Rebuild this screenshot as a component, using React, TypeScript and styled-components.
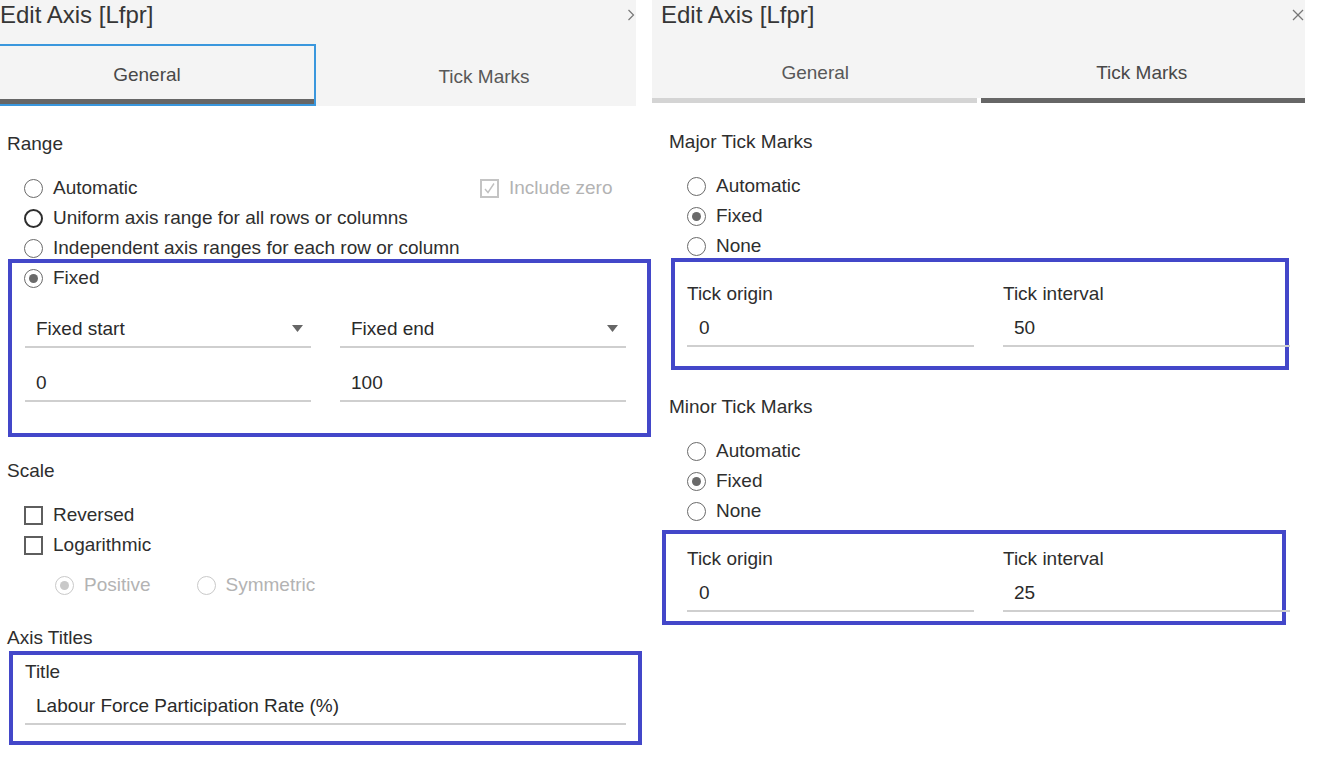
import React from "react";
import styled, { createGlobalStyle } from "styled-components";

const GlobalStyle = createGlobalStyle`
  html, body { margin: 0; padding: 0; background: #ffffff; }
  body { font-family: "Liberation Sans", Arial, sans-serif; color: #333; }
  * { box-sizing: border-box; }
`;

const ANNOT = "#4347c9";

const Page = styled.div`
  display: flex;
  align-items: flex-start;
  width: 1341px;
  height: 779px;
  overflow: hidden;
  background: #fff;
`;

const Panel = styled.div<{ $width: number }>`
  width: ${(p) => p.$width}px;
  flex: none;
  display: flex;
  flex-direction: column;
`;

const Header = styled.div<{ $width: number }>`
  width: ${(p) => p.$width}px;
  display: flex;
  flex-direction: column;
  overflow: hidden;
`;

const TitleRow = styled.div<{ $pad: number }>`
  height: 44px;
  background: #f4f4f4;
  display: flex;
  align-items: flex-start;
  justify-content: space-between;
  padding-left: ${(p) => p.$pad}px;
  padding-right: 1px;
`;

const Title = styled.h1`
  margin: 0;
  font-size: 24px;
  line-height: 30px;
  font-weight: normal;
  color: #363636;
`;

const HeaderIcon = styled.span`
  display: flex;
  align-items: center;
  height: 30px;
`;

const Tabs = styled.div<{ $cols: string; $shift?: number }>`
  display: grid;
  grid-template-columns: ${(p) => p.$cols};
  margin-left: ${(p) => p.$shift ?? 0}px;
`;

const Tab = styled.div<{ $height: number; $focused?: boolean }>`
  height: ${(p) => p.$height}px;
  display: flex;
  flex-direction: column;
  border: ${(p) => (p.$focused ? "2px solid #3a97dd" : "none")};
`;

const TabLabel = styled.div<{ $active?: boolean }>`
  flex: 1;
  background: #f4f4f4;
  display: flex;
  align-items: center;
  justify-content: center;
  padding-top: 4px;
  font-size: 19px;
  color: ${(p) => (p.$active ? "#484848" : "#585858")};
`;

const TabBar = styled.div<{ $tone: "dark" | "light" | "none"; $side?: "left" | "right" }>`
  height: ${(p) => (p.$tone === "none" ? 0 : 5)}px;
  flex: none;
  background: ${(p) => (p.$tone === "dark" ? "#666666" : p.$tone === "light" ? "#d4d4d4" : "transparent")};
  margin-left: ${(p) => (p.$side === "right" ? 2 : 0)}px;
  margin-right: ${(p) => (p.$side === "left" ? 2 : 0)}px;
`;

const Content = styled.div<{ $pad: number }>`
  display: flex;
  flex-direction: column;
  padding-left: ${(p) => p.$pad}px;
`;

const SectionTitle = styled.h2<{ $top: number; $lh?: number }>`
  margin: ${(p) => p.$top}px 0 0 0;
  font-size: 19px;
  line-height: ${(p) => p.$lh ?? 30}px;
  font-weight: normal;
  color: #2e2e2e;
`;

const OptionList = styled.div<{ $top: number }>`
  display: flex;
  flex-direction: column;
  margin-top: ${(p) => p.$top}px;
`;

const OptionRow = styled.div<{ $indent: number; $gap?: number }>`
  height: 30px;
  display: flex;
  align-items: center;
  padding-left: ${(p) => p.$indent}px;
  gap: ${(p) => p.$gap ?? 0}px;
`;

const Option = styled.label<{ $disabled?: boolean }>`
  display: flex;
  align-items: center;
  gap: 10px;
  font-size: 19px;
  color: ${(p) => (p.$disabled ? "#b3b3b3" : "#2e2e2e")};
`;

const Aside = styled.div`
  margin-left: auto;
  width: 172px;
`;

const RadioCircle = styled.span<{ $checked?: boolean; $disabled?: boolean; $strong?: boolean }>`
  width: 19px;
  height: 19px;
  flex: none;
  border-radius: 50%;
  border: ${(p) =>
    p.$strong ? "2px solid #2e2e2e" : `1.5px solid ${p.$disabled ? "#c9c9c9" : "#6a6a6a"}`};
  display: inline-flex;
  align-items: center;
  justify-content: center;
  &::after {
    content: "";
    width: 9px;
    height: 9px;
    border-radius: 50%;
    background: ${(p) => (p.$disabled ? "#c9c9c9" : "#6a6a6a")};
    display: ${(p) => (p.$checked ? "block" : "none")};
  }
`;

const CheckSquare = styled.span<{ $disabled?: boolean }>`
  width: 19px;
  height: 19px;
  flex: none;
  border: 2px solid ${(p) => (p.$disabled ? "#c4c4c4" : "#5e5e5e")};
  display: inline-flex;
  align-items: center;
  justify-content: center;
`;

const Highlight = styled.div<{ $top: number; $left: number; $width: number; $pad: string }>`
  margin-top: ${(p) => p.$top}px;
  margin-left: ${(p) => p.$left}px;
  width: ${(p) => p.$width}px;
  border: 4px solid ${ANNOT};
  padding: ${(p) => p.$pad};
  display: flex;
  flex-direction: column;
`;

const FieldGrid = styled.div<{ $top: number; $cols: string; $shift?: number }>`
  display: grid;
  grid-template-columns: ${(p) => p.$cols};
  column-gap: 29px;
  row-gap: 17px;
  margin-top: ${(p) => p.$top}px;
  margin-left: ${(p) => p.$shift ?? 0}px;
`;

const FieldGroup = styled.div`
  display: flex;
  flex-direction: column;
  gap: 4px;
`;

const FieldLabel = styled.div`
  font-size: 19px;
  line-height: 24px;
  color: #2e2e2e;
`;

const Field = styled.div<{ $pad?: number; $width?: number; $top?: number }>`
  height: 37px;
  width: ${(p) => (p.$width ? `${p.$width}px` : "auto")};
  margin-top: ${(p) => p.$top ?? 0}px;
  border-bottom: 2px solid #cfcfcf;
  display: flex;
  align-items: center;
  justify-content: space-between;
  padding-left: ${(p) => p.$pad ?? 11}px;
  padding-right: 8px;
  font-size: 19px;
  color: #2a2a2a;
`;

const Radio = ({
  label,
  checked,
  disabled,
  strong,
}: {
  label: string;
  checked?: boolean;
  disabled?: boolean;
  strong?: boolean;
}) => (
  <Option $disabled={disabled}>
    <RadioCircle $checked={checked} $disabled={disabled} $strong={strong} />
    {label}
  </Option>
);

const Checkbox = ({ label, checked, disabled }: { label: string; checked?: boolean; disabled?: boolean }) => (
  <Option $disabled={disabled}>
    <CheckSquare $disabled={disabled}>
      {checked && (
        <svg width="13" height="13" viewBox="0 0 13 13">
          <polyline points="2,7 5,10.5 11,1.5" fill="none" stroke="#c0c0c0" strokeWidth="1.4" />
        </svg>
      )}
    </CheckSquare>
    {label}
  </Option>
);

const Caret = () => (
  <svg width="11" height="7" viewBox="0 0 11 7">
    <polygon points="0,0 11,0 5.5,7" fill="#666" />
  </svg>
);

const Chevron = () => (
  <svg width="8" height="12" viewBox="0 0 8 12">
    <polyline points="1.5,1 6.5,6 1.5,11" fill="none" stroke="#777" strokeWidth="1.2" />
  </svg>
);

const CloseX = () => (
  <svg width="12" height="12" viewBox="0 0 12 12">
    <line x1="1" y1="1" x2="11" y2="11" stroke="#777" strokeWidth="1.2" />
    <line x1="11" y1="1" x2="1" y2="11" stroke="#777" strokeWidth="1.2" />
  </svg>
);

const TickFields = ({ origin, interval }: { origin: string; interval: string }) => (
  <FieldGrid $top={0} $cols="287px 282px">
    <FieldGroup>
      <FieldLabel>Tick origin</FieldLabel>
      <Field $pad={12}>{origin}</Field>
    </FieldGroup>
    <FieldGroup>
      <FieldLabel>Tick interval</FieldLabel>
      <Field $pad={11} $width={287}>{interval}</Field>
    </FieldGroup>
  </FieldGrid>
);

export default function App() {
  return (
    <>
      <GlobalStyle />
      <Page>
        <Panel $width={652}>
          <Header $width={636}>
            <TitleRow $pad={0}>
              <Title>Edit Axis [Lfpr]</Title>
              <HeaderIcon>
                <Chevron />
              </HeaderIcon>
            </TitleRow>
            <Tabs $cols="338px 336px" $shift={-22}>
              <Tab $height={62} $focused>
                <TabLabel $active>General</TabLabel>
                <TabBar $tone="dark" />
              </Tab>
              <Tab $height={62}>
                <TabLabel>Tick Marks</TabLabel>
                <TabBar $tone="none" />
              </Tab>
            </Tabs>
          </Header>

          <Content $pad={7}>
            <SectionTitle $top={23}>Range</SectionTitle>
            <OptionList $top={14}>
              <OptionRow $indent={17}>
                <Radio label="Automatic" />
                <Aside>
                  <Checkbox label="Include zero" checked disabled />
                </Aside>
              </OptionRow>
              <OptionRow $indent={17}>
                <Radio label="Uniform axis range for all rows or columns" strong />
              </OptionRow>
              <OptionRow $indent={17}>
                <Radio label="Independent axis ranges for each row or column" />
              </OptionRow>
            </OptionList>

            <Highlight $top={-4} $left={1} $width={643} $pad="0 0 31px 12px">
              <OptionRow $indent={0}>
                <Radio label="Fixed" checked />
              </OptionRow>
              <FieldGrid $top={18} $cols="286px 286px" $shift={1}>
                <Field>
                  Fixed start
                  <Caret />
                </Field>
                <Field>
                  Fixed end
                  <Caret />
                </Field>
                <Field>0</Field>
                <Field>100</Field>
              </FieldGrid>
            </Highlight>

            <SectionTitle $top={19}>Scale</SectionTitle>
            <OptionList $top={14}>
              <OptionRow $indent={17}>
                <Checkbox label="Reversed" />
              </OptionRow>
              <OptionRow $indent={17}>
                <Checkbox label="Logarithmic" />
              </OptionRow>
            </OptionList>
            <OptionList $top={10}>
              <OptionRow $indent={48} $gap={46}>
                <Radio label="Positive" checked disabled />
                <Radio label="Symmetric" disabled />
              </OptionRow>
            </OptionList>

            <SectionTitle $top={26} $lh={24}>
              Axis Titles
            </SectionTitle>
            <Highlight $top={1} $left={2} $width={633} $pad="5px 0 16px 12px">
              <FieldLabel>Title</FieldLabel>
              <Field $top={4} $width={601}>
                Labour Force Participation Rate (%)
              </Field>
            </Highlight>
          </Content>
        </Panel>

        <Panel $width={653}>
          <Header $width={653}>
            <TitleRow $pad={9}>
              <Title>Edit Axis [Lfpr]</Title>
              <HeaderIcon>
                <CloseX />
              </HeaderIcon>
            </TitleRow>
            <Tabs $cols="1fr 1fr">
              <Tab $height={59}>
                <TabLabel>General</TabLabel>
                <TabBar $tone="light" $side="left" />
              </Tab>
              <Tab $height={59}>
                <TabLabel $active>Tick Marks</TabLabel>
                <TabBar $tone="dark" $side="right" />
              </Tab>
            </Tabs>
          </Header>

          <Content $pad={17}>
            <SectionTitle $top={24}>Major Tick Marks</SectionTitle>
            <OptionList $top={14}>
              <OptionRow $indent={18}>
                <Radio label="Automatic" />
              </OptionRow>
              <OptionRow $indent={18}>
                <Radio label="Fixed" checked />
              </OptionRow>
              <OptionRow $indent={18}>
                <Radio label="None" />
              </OptionRow>
            </OptionList>
            <Highlight $top={-3} $left={2} $width={618} $pad="20px 0 19px 12px">
              <TickFields origin="0" interval="50" />
            </Highlight>

            <SectionTitle $top={22}>Minor Tick Marks</SectionTitle>
            <OptionList $top={14}>
              <OptionRow $indent={18}>
                <Radio label="Automatic" />
              </OptionRow>
              <OptionRow $indent={18}>
                <Radio label="Fixed" checked />
              </OptionRow>
              <OptionRow $indent={18}>
                <Radio label="None" />
              </OptionRow>
            </OptionList>
            <Highlight $top={4} $left={-7} $width={624} $pad="13px 0 9px 21px">
              <TickFields origin="0" interval="25" />
            </Highlight>
          </Content>
        </Panel>
      </Page>
    </>
  );
}
